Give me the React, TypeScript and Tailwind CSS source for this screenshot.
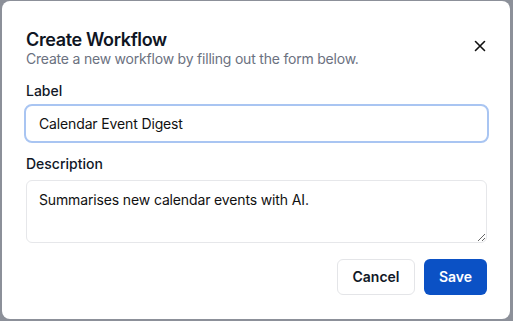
import React from 'react';

const App: React.FC = () => {
  return (
    <div className="w-[513px] h-[321px] bg-[#8c9099] pl-[2px] pr-[3px] pt-[1px] pb-[2px] font-['Inter',sans-serif]">
      <div className="h-full bg-white rounded-lg flex flex-col pl-6 pr-[23px] pt-[29px]">
        {/* Header */}
        <div className="flex items-start justify-between">
          <div>
            <h2 className="text-lg font-semibold leading-5 tracking-[-0.02em] text-[#0f1523]">Create Workflow</h2>
            <p className="text-sm leading-4 tracking-[-0.015em] text-[#6b7180] mt-[1px]">Create a new workflow by filling out the form below.</p>
          </div>
          <button className="mt-[10px] mr-[1px] text-[#111]">
            <svg width="12" height="12" viewBox="0 0 12 12" fill="none" stroke="currentColor" strokeWidth="1.6" strokeLinecap="round">
              <path d="M1.5 1.5l9 9M10.5 1.5l-9 9" />
            </svg>
          </button>
        </div>

        {/* Form */}
        <div className="mt-[14px] flex flex-col">
          <label className="text-sm leading-5 font-medium text-[#111827]">Label</label>
          <input
            defaultValue="Calendar Event Digest"
            className="mt-[3px] -ml-[2px] -mr-[2px] h-[39px] px-[13px] rounded-lg border-2 border-[#a9c5f2] text-sm tracking-[-0.01em] text-[#111] outline-none"
          />
          <label className="mt-[11px] text-sm leading-5 font-medium text-[#111827]">Description</label>
          <textarea
            defaultValue="Summarises new calendar events with AI."
            className="mt-[6px] h-[63px] px-[12px] py-[9px] rounded-md border border-[#e6e7ea] text-sm leading-5 tracking-[-0.01em] text-[#111] outline-none resize-y"
          />
        </div>

        {/* Footer */}
        <div className="mt-4 flex justify-end gap-[9px]">
          <button className="h-[36px] w-[78px] rounded-md border border-[#e4e5e8] text-sm font-semibold text-[#111827]">Cancel</button>
          <button className="h-[36px] w-[63px] rounded-md bg-[#0b51c5] text-sm font-semibold text-white">Save</button>
        </div>
      </div>
    </div>
  );
};

export default App;
